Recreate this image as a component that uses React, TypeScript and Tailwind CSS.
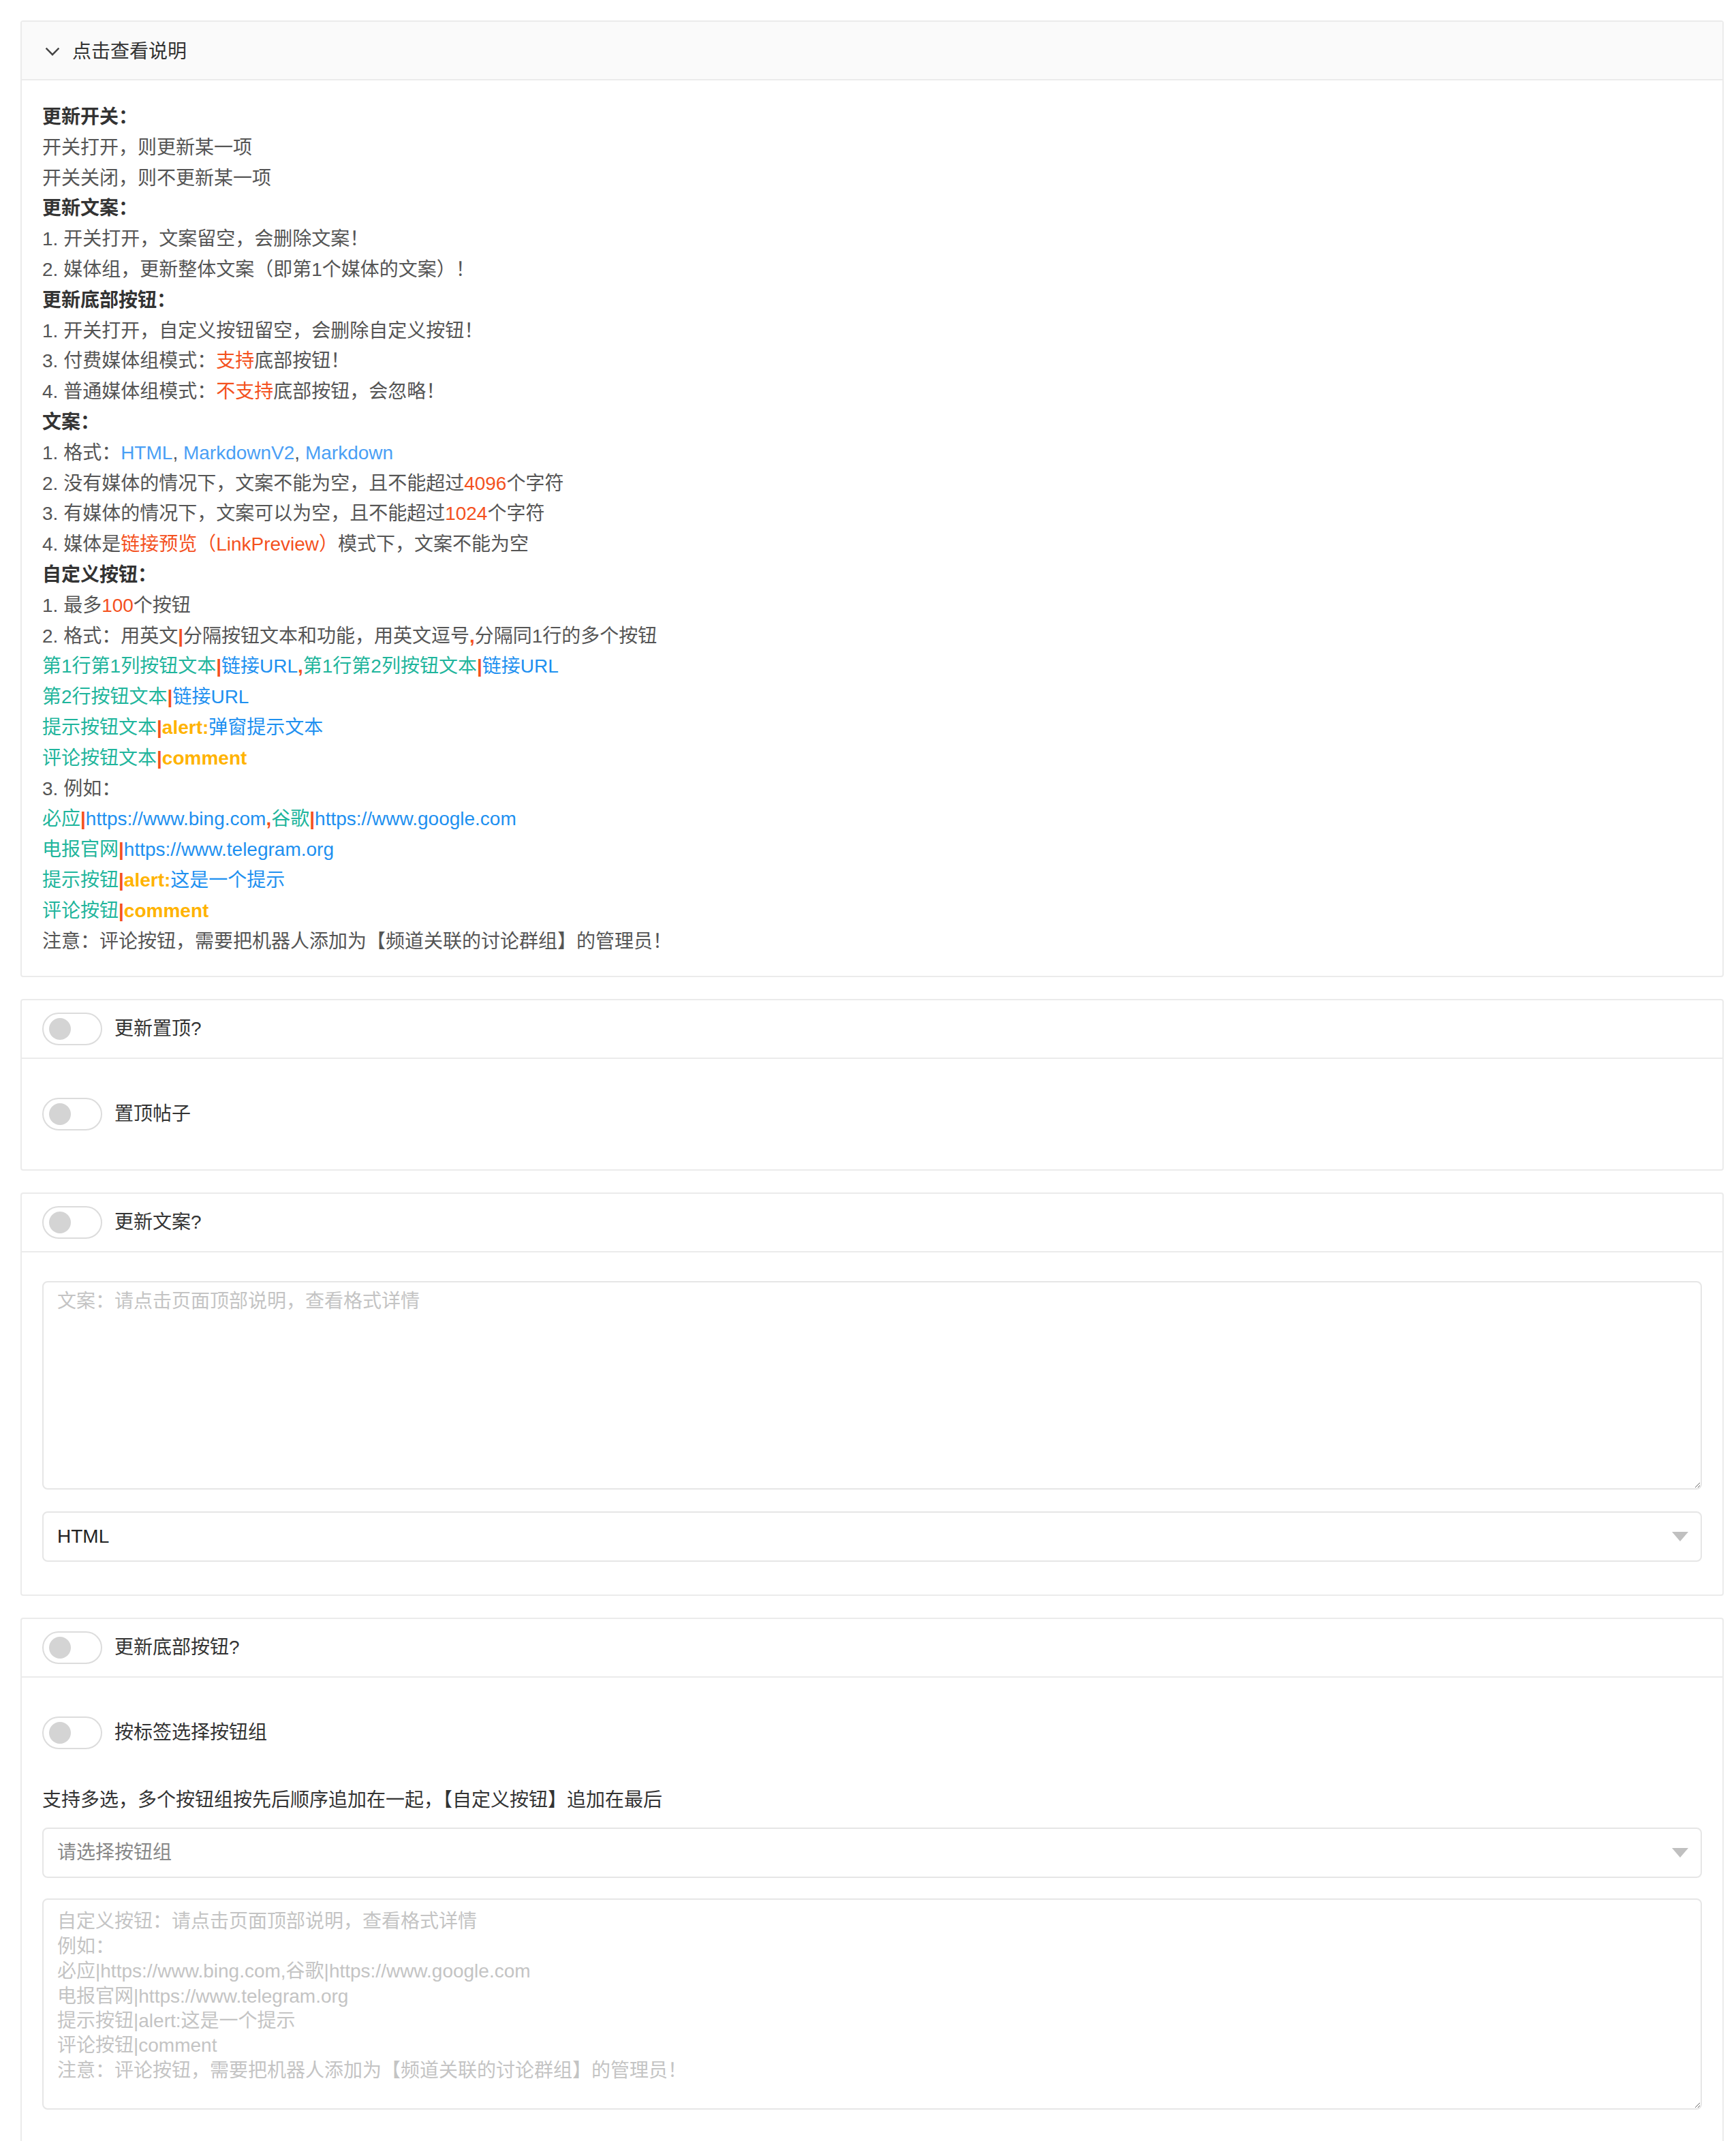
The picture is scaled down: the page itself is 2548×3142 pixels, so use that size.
import type { ReactNode } from 'react'

const red = 'text-[#f4511e]'
const teal = 'text-[#1fb59c]'
const blue = 'text-[#1e90f0]'
const lightBlue = 'text-[#4a9ff5]'
const orange = 'text-[#ffb300] font-bold'

function Bar() {
  return <span className="font-bold text-[#f4511e]">|</span>
}

function Comma() {
  return <span className="font-bold text-[#f4511e]">,</span>
}

function Head({ children }: { children: ReactNode }) {
  return <div className="font-bold text-[#333]">{children}</div>
}

function Toggle({ label }: { label: string }) {
  return (
    <div className="flex items-center gap-[9px]">
      <span className="inline-flex h-[24px] w-[44px] shrink-0 items-center rounded-full border border-[#dcdcdc] bg-white">
        <span className="ml-[4px] h-[16px] w-[16px] rounded-full bg-[#d4d4d4]" />
      </span>
      <span className="text-[14px] text-[#333]">{label}</span>
    </div>
  )
}

function Card({ title, children, bodyClass }: { title: string; children: ReactNode; bodyClass?: string }) {
  return (
    <div className="rounded-[2px] border border-[#ebebeb] bg-white">
      <div className="flex h-[43px] items-center border-b border-[#ebebeb] px-[15px]">
        <Toggle label={title} />
      </div>
      <div className={bodyClass ?? 'px-[15px] py-[15px]'}>{children}</div>
    </div>
  )
}

function Select({ value, placeholder }: { value?: string; placeholder?: string }) {
  return (
    <div className="flex h-[37px] items-center justify-between rounded-[4px] border border-[#e6e6e6] bg-white pl-[10px] pr-[9px] text-[14px]">
      {value ? <span className="text-[#222]">{value}</span> : <span className="text-[#888]">{placeholder}</span>}
      <svg width="12" height="7" viewBox="0 0 12 7">
        <path d="M0 0 L12 0 L6 7 Z" fill="#c0c0c0" />
      </svg>
    </div>
  )
}

const buttonsPlaceholder = [
  '自定义按钮：请点击页面顶部说明，查看格式详情',
  '例如：',
  '必应|https://www.bing.com,谷歌|https://www.google.com',
  '电报官网|https://www.telegram.org',
  '提示按钮|alert:这是一个提示',
  '评论按钮|comment',
  '注意：评论按钮，需要把机器人添加为【频道关联的讨论群组】的管理员！',
].join('\n')

export default function App() {
  return (
    <div className="[zoom:2] min-h-[1571px] bg-white pl-[15px] pr-[9px] pt-[15px] font-['Liberation_Sans','Noto_Sans_CJK_SC',sans-serif]">
      <div className="flex flex-col gap-[16px]">
        {/* 说明 */}
        <div className="rounded-[2px] border border-[#ebebeb] bg-white">
          <div className="flex h-[43px] items-center gap-[9px] border-b border-[#ebebeb] bg-[#fafafa] px-[17px] pt-[2px]">
            <svg width="11" height="7" viewBox="0 0 11 7" fill="none">
              <path d="M0.8 0.8 L5.5 5.6 L10.2 0.8" stroke="#444" strokeWidth="1.2" />
            </svg>
            <span className="text-[14px] text-[#333]">点击查看说明</span>
          </div>
          <div className="px-[15px] pb-[14px] pt-[16px] text-[14px] leading-[22.4px] text-[#555]">
            <Head>更新开关：</Head>
            <div>开关打开，则更新某一项</div>
            <div>开关关闭，则不更新某一项</div>
            <Head>更新文案：</Head>
            <div>1. 开关打开，文案留空，会删除文案！</div>
            <div>2. 媒体组，更新整体文案（即第1个媒体的文案）！</div>
            <Head>更新底部按钮：</Head>
            <div>1. 开关打开，自定义按钮留空，会删除自定义按钮！</div>
            <div>3. 付费媒体组模式：<span className={red}>支持</span>底部按钮！</div>
            <div>4. 普通媒体组模式：<span className={red}>不支持</span>底部按钮，会忽略！</div>
            <Head>文案：</Head>
            <div>
              1. 格式：<span className={lightBlue}>HTML</span>, <span className={lightBlue}>MarkdownV2</span>,{' '}
              <span className={lightBlue}>Markdown</span>
            </div>
            <div>2. 没有媒体的情况下，文案不能为空，且不能超过<span className={red}>4096</span>个字符</div>
            <div>3. 有媒体的情况下，文案可以为空，且不能超过<span className={red}>1024</span>个字符</div>
            <div>4. 媒体是<span className={red}>链接预览（LinkPreview）</span>模式下，文案不能为空</div>
            <Head>自定义按钮：</Head>
            <div>1. 最多<span className={red}>100</span>个按钮</div>
            <div>
              2. 格式：用英文<Bar />分隔按钮文本和功能，用英文逗号<Comma />分隔同1行的多个按钮
            </div>
            <div>
              <span className={teal}>第1行第1列按钮文本</span><Bar /><span className={blue}>链接URL</span><Comma />
              <span className={teal}>第1行第2列按钮文本</span><Bar /><span className={blue}>链接URL</span>
            </div>
            <div>
              <span className={teal}>第2行按钮文本</span><Bar /><span className={blue}>链接URL</span>
            </div>
            <div>
              <span className={teal}>提示按钮文本</span><Bar /><span className={orange}>alert:</span>
              <span className={blue}>弹窗提示文本</span>
            </div>
            <div>
              <span className={teal}>评论按钮文本</span><Bar /><span className={orange}>comment</span>
            </div>
            <div>3. 例如：</div>
            <div>
              <span className={teal}>必应</span><Bar /><span className={blue}>https://www.bing.com</span><Comma />
              <span className={teal}>谷歌</span><Bar /><span className={blue}>https://www.google.com</span>
            </div>
            <div>
              <span className={teal}>电报官网</span><Bar /><span className={blue}>https://www.telegram.org</span>
            </div>
            <div>
              <span className={teal}>提示按钮</span><Bar /><span className={orange}>alert:</span>
              <span className={blue}>这是一个提示</span>
            </div>
            <div>
              <span className={teal}>评论按钮</span><Bar /><span className={orange}>comment</span>
            </div>
            <div>注意：评论按钮，需要把机器人添加为【频道关联的讨论群组】的管理员！</div>
          </div>
        </div>

        {/* 置顶 */}
        <Card title="更新置顶?">
          <div className="flex h-[51px] items-center">
            <Toggle label="置顶帖子" />
          </div>
        </Card>

        {/* 文案 */}
        <Card title="更新文案?" bodyClass="flex flex-col gap-[16px] px-[15px] pb-[24px] pt-[21px]">
          <textarea
            className="block h-[153px] w-full rounded-[4px] border border-[#e6e6e6] px-[10px] py-[5px] text-[14px] leading-[18.2px] text-[#333] placeholder:text-[#c4c4c4] focus:outline-none"
            placeholder="文案：请点击页面顶部说明，查看格式详情"
          />
          <Select value="HTML" />
        </Card>

        {/* 底部按钮 */}
        <Card title="更新底部按钮?" bodyClass="px-[15px] pb-[25px] pt-[15px]">
          <div className="flex h-[51px] items-center">
            <Toggle label="按标签选择按钮组" />
          </div>
          <div className="mt-[13px] text-[14px] leading-[22px] text-[#333]">
            支持多选，多个按钮组按先后顺序追加在一起，【自定义按钮】追加在最后
          </div>
          <div className="mt-[9px]">
            <Select placeholder="请选择按钮组" />
          </div>
          <textarea
            className="mt-[15px] block h-[155px] w-full rounded-[4px] border border-[#e6e6e6] px-[10px] py-[7px] text-[14px] leading-[18.2px] text-[#333] placeholder:text-[#c4c4c4] focus:outline-none"
            placeholder={buttonsPlaceholder}
          />
        </Card>
      </div>
    </div>
  )
}
